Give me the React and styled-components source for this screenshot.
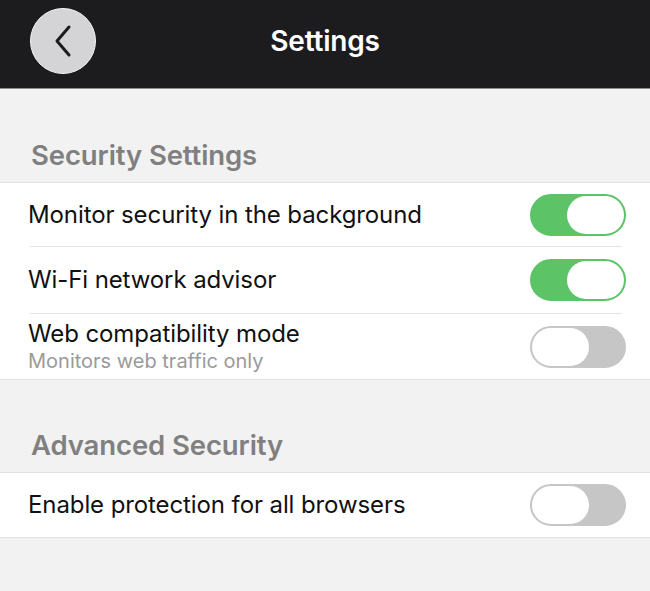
import React, { useState } from 'react';
import styled, { createGlobalStyle } from 'styled-components';

const GlobalStyle = createGlobalStyle`
    html, body {
        margin: 0;
        padding: 0;
        background: #f2f2f2;
        font-family: Inter, "Liberation Sans", sans-serif;
    }
`;

const Page = styled.div`
    width: 650px;
    min-height: 591px;
    background: #f2f2f2;
`;

const Header = styled.header`
    height: 89px;
    background: #1c1c1e;
    border-bottom: 1px solid #8e8e8e;
    display: grid;
    grid-template-columns: 130px 1fr 130px;
    align-items: center;
    padding: 0 30px;
    box-sizing: border-box;
`;

const BackButton = styled.button`
    width: 66px;
    height: 66px;
    border-radius: 50%;
    border: 1px solid #f4f4f4;
    background: #d4d4d6;
    display: flex;
    align-items: center;
    justify-content: center;
    padding: 0;
    margin-top: -6px;
`;

const Title = styled.h1`
    margin: -6px 0 0;
    text-align: center;
    color: #fff;
    font-size: 28px;
    font-weight: 600;
    letter-spacing: -0.2px;
`;

const SectionHeader = styled.h2`
    margin: 0;
    padding: ${p => p.$top}px 31px 10px;
    color: #808080;
    font-size: 27.5px;
    font-weight: 600;
    letter-spacing: -0.1px;
`;

const Group = styled.div`
    background: #fff;
    border-top: 1px solid #e2e2e2;
    border-bottom: 1px solid #e2e2e2;
`;

const Row = styled.div`
    height: ${p => p.$height}px;
    display: flex;
    align-items: center;
    justify-content: space-between;
    padding: 0 24px 0 28px;
    box-sizing: border-box;
`;

const Divider = styled.div`
    height: 1px;
    background: #e4e4e4;
    margin: 0 28px 0 30px;
`;

const Labels = styled.div`
    display: flex;
    flex-direction: column;
`;

const Label = styled.span`
    color: #111;
    font-size: 24px;
    font-weight: 400;
    letter-spacing: -0.1px;
    line-height: 30px;
`;

const Sub = styled.span`
    color: #9a9a9a;
    font-size: 20px;
    line-height: 25px;
    letter-spacing: 0;
`;

const Track = styled.button`
    width: 96px;
    height: 42px;
    border-radius: 21px;
    border: 2px solid ${p => (p.$on ? '#5cc466' : '#c6c6c6')};
    background: ${p => (p.$on ? '#5cc466' : '#c6c6c6')};
    padding: 0;
    display: flex;
    justify-content: ${p => (p.$on ? 'flex-end' : 'flex-start')};
    align-items: center;
    box-sizing: border-box;
    cursor: pointer;
    flex-shrink: 0;
`;

const Knob = styled.span`
    width: 57px;
    height: 38px;
    border-radius: 19px;
    background: #fff;
`;

const Toggle = ({ on, onChange }) => (
    <Track $on={on} onClick={onChange}>
        <Knob />
    </Track>
);

const Chevron = () => (
    <svg width="22" height="34" viewBox="0 0 22 34">
        <path d="M17 3 L5 17 L17 31" fill="none" stroke="#1c1c1e" strokeWidth="3" strokeLinecap="round" strokeLinejoin="round" />
    </svg>
);

export default function App() {
    const [state, setState] = useState({
        monitor: true,
        wifi: true,
        web: false,
        browsers: false
    });
    const flip = key => () => setState(s => ({ ...s, [key]: !s[key] }));

    return (
        <Page>
            <GlobalStyle />
            <Header>
                <BackButton aria-label="Back">
                    <Chevron />
                </BackButton>
                <Title>Settings</Title>
                <div />
            </Header>

            <SectionHeader $top={49}>Security Settings</SectionHeader>
            <Group>
                <Row $height={63}>
                    <Labels><Label>Monitor security in the background</Label></Labels>
                    <Toggle on={state.monitor} onChange={flip('monitor')} />
                </Row>
                <Divider />
                <Row $height={66}>
                    <Labels><Label>Wi-Fi network advisor</Label></Labels>
                    <Toggle on={state.wifi} onChange={flip('wifi')} />
                </Row>
                <Divider />
                <Row $height={65}>
                    <Labels>
                        <Label>Web compatibility mode</Label>
                        <Sub>Monitors web traffic only</Sub>
                    </Labels>
                    <Toggle on={state.web} onChange={flip('web')} />
                </Row>
            </Group>

            <SectionHeader $top={48}>Advanced Security</SectionHeader>
            <Group>
                <Row $height={64}>
                    <Labels><Label>Enable protection for all browsers</Label></Labels>
                    <Toggle on={state.browsers} onChange={flip('browsers')} />
                </Row>
            </Group>
        </Page>
    );
}
